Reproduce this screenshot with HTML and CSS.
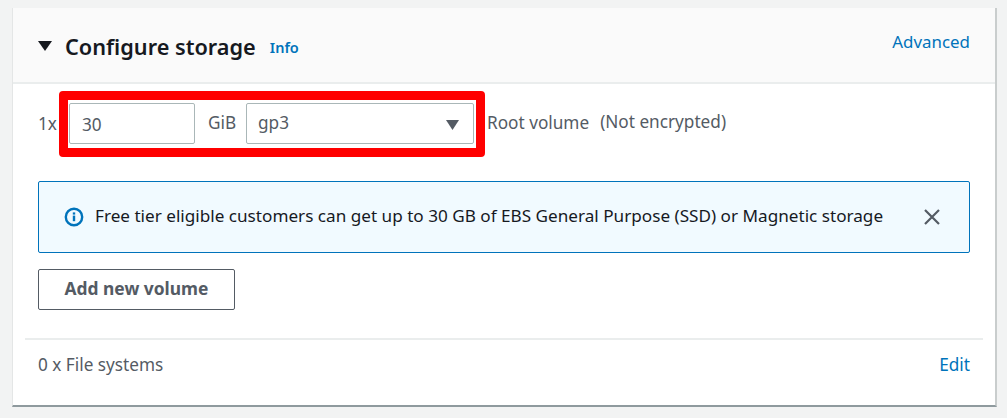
FILE: index.html
```html
<!DOCTYPE html>
<html lang="en">
  <head>
    <meta charset="UTF-8" />
    <title>Configure storage</title>
    <link rel="stylesheet" href="styles.css">
  </head>

  <body>
    <div class="card">
      <div class="card-header">
        <div class="title-group">
          <svg class="caret" width="14" height="10" viewBox="0 0 14 10"><path d="M0 0H14L7 10Z" fill="#16191f"/></svg>
          <h2 class="title">Configure storage</h2>
          <a class="info-link">Info</a>
        </div>
        <a class="link advanced">Advanced</a>
      </div>

      <div class="card-body">
        <div class="volume-row">
          <span class="multiplier">1x</span>
          <div class="highlight">
            <div class="size-input">30</div>
            <span class="unit">GiB</span>
            <div class="type-select">
              <span class="type-value">gp3</span>
              <svg class="type-arrow" width="13" height="10" viewBox="0 0 13 10"><path d="M0 0H13L6.5 10Z" fill="#545b64"/></svg>
            </div>
          </div>
          <span class="root-label">Root volume</span>
          <span class="encrypted">(Not encrypted)</span>
        </div>

        <div class="notice">
          <svg class="notice-icon" width="20" height="20" viewBox="0 0 20 20">
            <circle cx="10" cy="10" r="8.2" fill="none" stroke="#0073bb" stroke-width="2.4"/>
            <rect x="8.8" y="8.6" width="2.4" height="5.6" fill="#0073bb"/>
            <rect x="8.8" y="5.4" width="2.4" height="2.2" fill="#0073bb"/>
          </svg>
          <span class="notice-text">Free tier eligible customers can get up to 30 GB of EBS General Purpose (SSD) or Magnetic storage</span>
          <svg class="notice-close" width="18" height="18" viewBox="0 0 18 18"><path d="M2 2L16 16M16 2L2 16" stroke="#545b64" stroke-width="2.2" fill="none"/></svg>
        </div>

        <button class="add-btn">Add new volume</button>
      </div>

      <div class="card-footer">
        <span>0 x File systems</span>
        <a class="link">Edit</a>
      </div>
    </div>
  </body>
</html>
```

FILE: styles.css
```css
* {
  box-sizing: border-box;
}

body {
  margin: 0;
  height: 418px;
  overflow: hidden;
  padding: 8px 10px 0 12px;
  background-color: #f2f3f3;
  font-family: "Noto Sans", sans-serif;
  font-size: 17.2px;
  color: #545b64;
}

.card {
  height: 399px;
  background-color: #fff;
  border-right: 2px solid #c9cdcd;
  border-bottom: 2px solid #8f9a9e;
  border-left: 1px solid #e4e6e6;
}

.card-header {
  height: 76px;
  display: flex;
  justify-content: space-between;
  padding: 0 25px;
  background-color: #fafafa;
  border-bottom: 2px solid #eaeded;
}

.title-group {
  display: flex;
  align-items: center;
  padding-top: 2px;
}

.caret {
  margin-right: 13px;
}

.title {
  margin: 0 14px 0 0;
  font-size: 21.7px;
  font-weight: 600;
  color: #16191f;
}

.info-link {
  font-size: 14.5px;
  font-weight: 600;
  color: #0073bb;
  margin-top: 1px;
}

.link {
  color: #0073bb;
}

.advanced {
  font-size: 16.9px;
  margin-top: 22px;
}

.card-body {
  padding: 7px 25px 0;
}

.volume-row {
  display: flex;
  align-items: center;
  height: 66px;
}

.multiplier {
  width: 21px;
  flex: none;
  margin-top: -1px;
}

.highlight {
  display: flex;
  align-items: center;
  width: 426px;
  height: 66px;
  padding: 0 0 1px 1px;
  border: 9px solid #ff0000;
  border-radius: 4px;
  background-color: #fff;
}

.size-input,
.type-select {
  height: 41px;
  display: flex;
  align-items: center;
  border: 1px solid #aab7b8;
  border-radius: 2px;
  background-color: #fff;
}

.size-input {
  width: 126px;
  padding: 2px 0 0 12px;
}

.unit {
  width: 51px;
  padding-left: 3px;
  text-align: center;
  margin-top: -2px;
}

.type-select {
  width: 228px;
  justify-content: space-between;
  padding: 0 14px 0 11px;
}

.type-value {
  margin-top: -2px;
}

.type-arrow {
  margin-top: 3px;
}

.root-label {
  margin-left: 2px;
  margin-top: -3px;
}

.encrypted {
  margin-left: 11px;
  margin-top: -5px;
}

.notice {
  display: flex;
  align-items: center;
  height: 72px;
  margin-top: 24px;
  padding: 0 28px 0 25px;
  background-color: #f1faff;
  border: 1px solid #0073bb;
  border-radius: 2px;
  color: #16191f;
}

.notice-icon {
  flex: none;
  margin-right: 11px;
}

.notice-text {
  flex: 1;
  font-size: 17.15px;
  white-space: nowrap;
  margin-top: -3px;
}

.notice-close {
  flex: none;
}

.add-btn {
  display: block;
  width: 197px;
  height: 41px;
  margin-top: 16px;
  padding: 0 0 3px;
  background-color: #fff;
  border: 1px solid #545b64;
  border-radius: 2px;
  font-family: inherit;
  font-size: 17.4px;
  font-weight: 700;
  color: #545b64;
}

.card-footer {
  display: flex;
  justify-content: space-between;
  align-items: center;
  height: 52px;
  margin: 28px 12px 0;
  padding: 0 13px 2px;
  border-top: 2px solid #eaeded;
}
```
